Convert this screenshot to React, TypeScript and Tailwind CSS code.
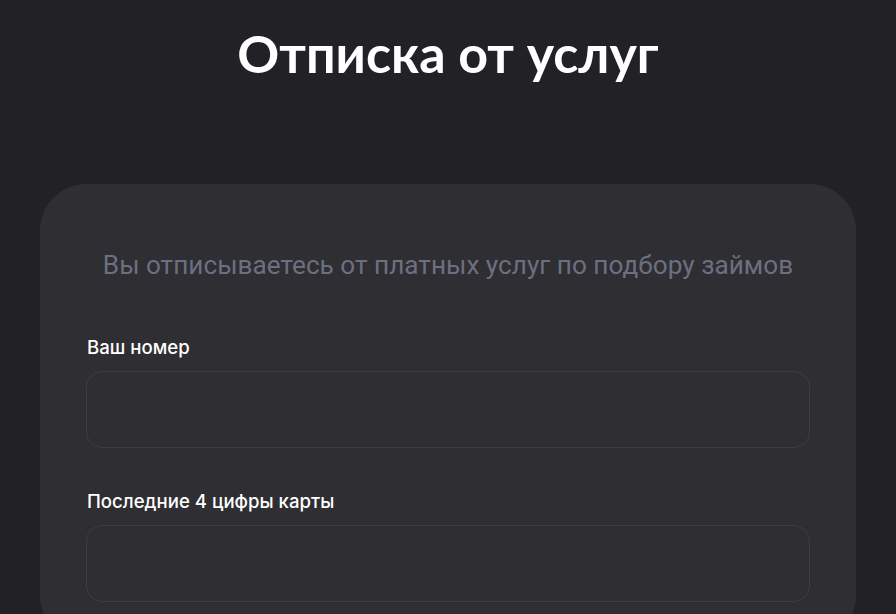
import React from "react";

export default function App() {
  return (
    <div className="min-h-[614px] w-full bg-[#222126] overflow-hidden" style={{ fontFamily: "Inter, 'Noto Sans', sans-serif" }}>
      <h1 className="pt-[22px] text-center text-[52px] leading-[62px] font-bold text-white" style={{ fontFamily: "Lato, sans-serif" }}>
        Отписка от услуг
      </h1>
      <div className="mx-[40px] mt-[100px] rounded-[46px] bg-[#2f2e33] px-[46px] pt-[64px] pb-[40px]">
        <p className="text-center text-[26.2px] leading-[34px] text-[#6b7081]" style={{ fontFamily: "Roboto, sans-serif" }}>
          Вы отписываетесь от платных услуг по подбору займов
        </p>
        <label className="mt-[53px] block text-[18.6px] leading-[24px] font-medium text-white pl-[1px]">Ваш номер</label>
        <div className="mt-[12px] h-[77px] rounded-[16px] border border-[#3e3d43] bg-[#2f2e33]" />
        <label className="mt-[41px] block text-[18.6px] leading-[24px] font-medium text-white pl-[1px]">Последние 4 цифры карты</label>
        <div className="mt-[12px] h-[77px] rounded-[16px] border border-[#3e3d43] bg-[#2f2e33]" />
      </div>
    </div>
  );
}
